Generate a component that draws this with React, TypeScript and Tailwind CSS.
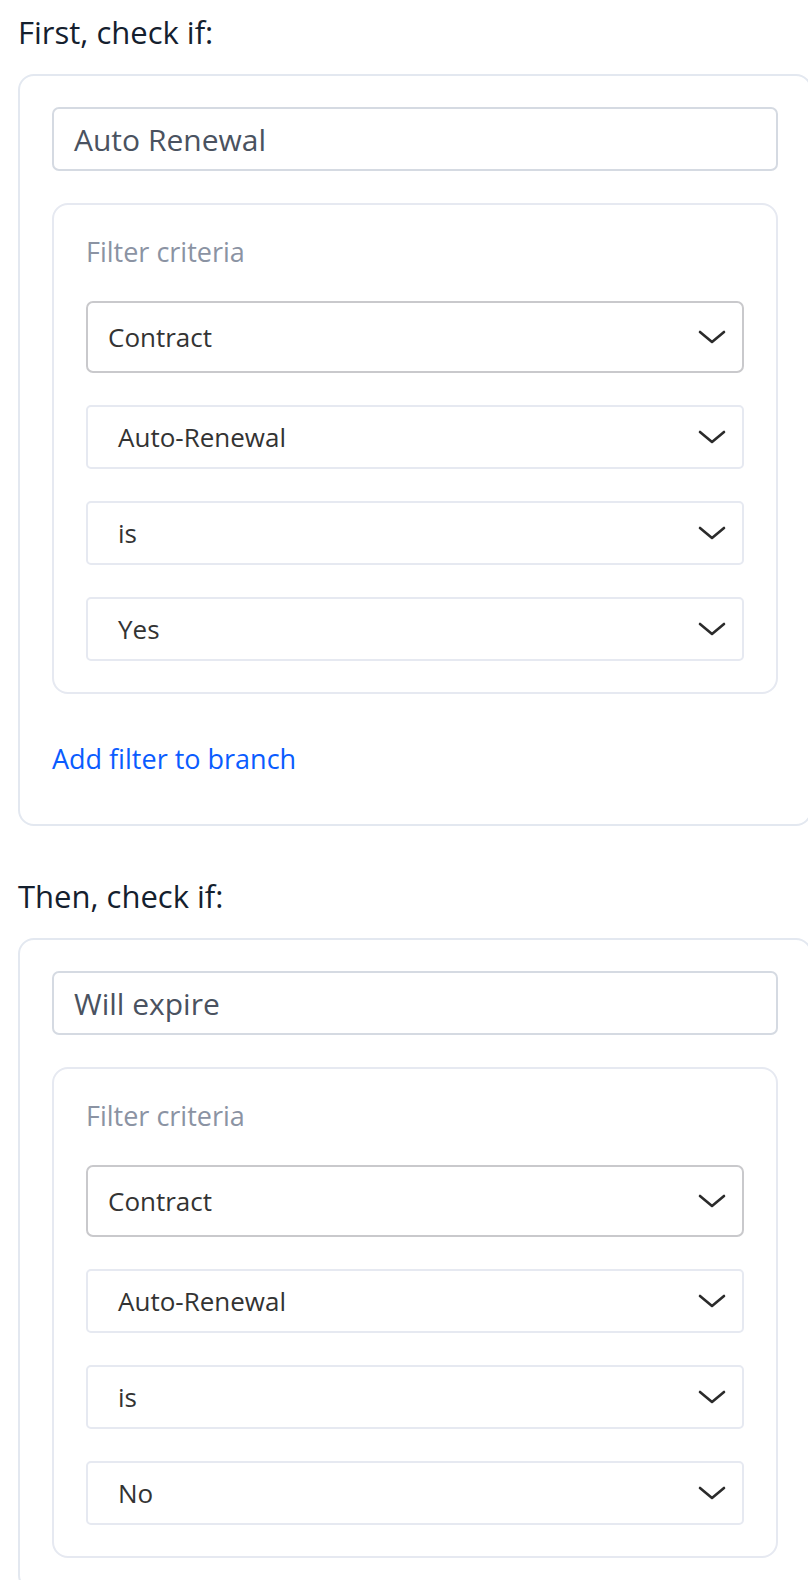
import React from "react";

interface Branch {
    heading: string;
    name: string;
    values: string[];
    showAdd: boolean;
}

const branches: Branch[] = [
    { heading: "First, check if:", name: "Auto Renewal", values: ["Auto-Renewal", "is", "Yes"], showAdd: true },
    { heading: "Then, check if:", name: "Will expire", values: ["Auto-Renewal", "is", "No"], showAdd: false },
];

const Chevron = () => (
    <svg width="28" height="14" viewBox="0 0 28 14" fill="none" className="shrink-0">
        <path d="M2 2l12 10L26 2" stroke="#2b2b2b" strokeWidth="2.6" strokeLinecap="round" strokeLinejoin="round" />
    </svg>
);

const SelectBox: React.FC<{ label: string; main?: boolean }> = ({ label, main }) => (
    <div
        className={
            main
                ? "flex h-[72px] items-center justify-between rounded-[7px] border-2 border-[#c9c9cc] pl-[20px] pr-[16px] text-[26px] text-[#333333]"
                : "flex h-[64px] items-center justify-between rounded-[5px] border-2 border-[#e6e9f1] pl-[30px] pr-[16px] text-[26px] text-[#333333]"
        }
    >
        <span>{label}</span>
        <Chevron />
    </div>
);

const BranchCard: React.FC<{ branch: Branch }> = ({ branch }) => (
    <section>
        <h2 className="pl-[18px] text-[31px] leading-[64px] text-[#14202e]">{branch.heading}</h2>
        <div className="mt-[10px] -mr-[4px] ml-[18px] rounded-[16px] border-2 border-[#e3e8f0] px-[32px] pt-[31px] pb-[31px]">
            <div className="flex h-[64px] items-center rounded-[7px] border-2 border-[#d5dae2] px-[20px] text-[30px] text-[#4a5260]">
                {branch.name}
            </div>
            <div className="mt-[32px] rounded-[16px] border-2 border-[#e6e9f1] px-[32px] pt-[30px] pb-[31px]">
                <div className="text-[27px] leading-[34px] text-[#8b93a3]">Filter criteria</div>
                <div className="mt-[32px] flex flex-col gap-[32px]">
                    <SelectBox label="Contract" main />
                    {branch.values.map((v, i) => (
                        <SelectBox key={i} label={v} />
                    ))}
                </div>
            </div>
            {branch.showAdd && (
                <div className="pt-[48px] pb-[17px] text-[27px] leading-[34px] text-[#0a5cff]">Add filter to branch</div>
            )}
        </div>
    </section>
);

export default function App() {
    return (
        <div className="h-[1580px] w-[808px] overflow-hidden bg-white font-['Open_Sans',sans-serif]">
            <BranchCard branch={branches[0]} />
            <div className="mt-[38px]">
                <BranchCard branch={branches[1]} />
            </div>
        </div>
    );
}
